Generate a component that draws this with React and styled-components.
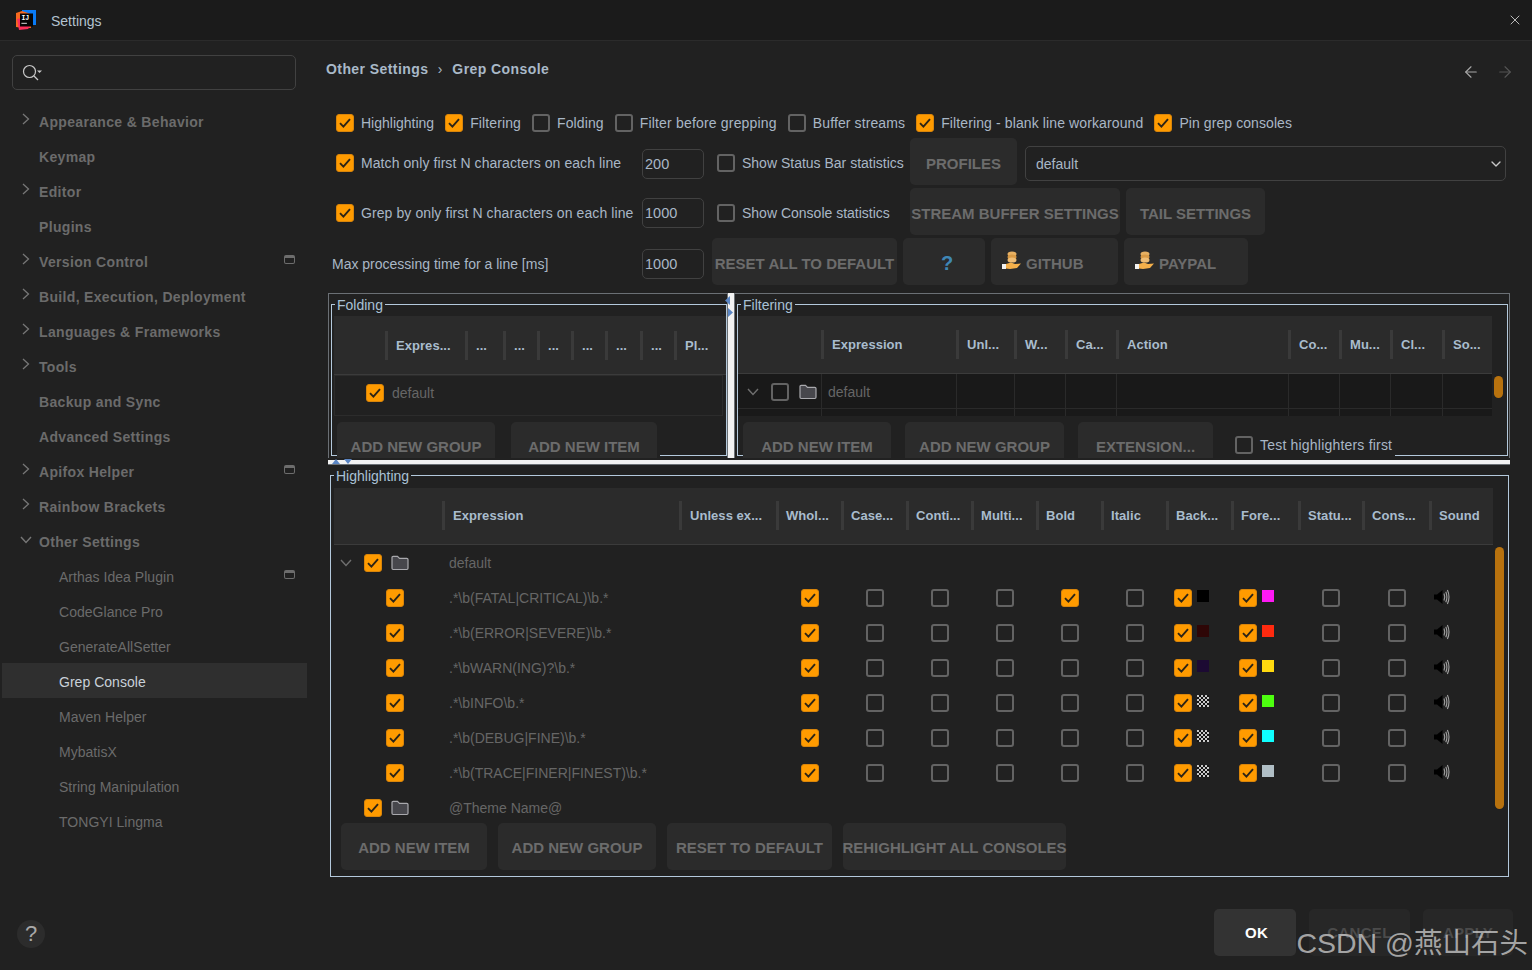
import React from "react";
import styled, { createGlobalStyle } from "styled-components";
import { ArrowLeft, ArrowRight, ChevronDown, X } from "lucide-react";

const Global = createGlobalStyle`
  html, body { margin: 0; padding: 0; background: #212121; overflow: hidden; }
  * { box-sizing: border-box; }
  body { font-family: "Liberation Sans", Arial, sans-serif; font-size: 14px; }
`;

const Root = styled.div`
  position: relative;
  width: 1532px;
  height: 970px;
  background: #212121;
  color: #a9b7c6;
  display: flex;
  flex-direction: column;
  overflow: hidden;
`;

const TitleBar = styled.header`
  height: 41px;
  flex: none;
  background: #1b1b1b;
  border-bottom: 1px solid #2b2b2b;
  display: flex;
  align-items: center;
  padding: 0 9px 0 16px;
  color: #b3c3d1;
`;
const TitleText = styled.span`
  margin: 2px 0 0 15px;
  flex: 1;
  font-size: 14px;
`;

const Body = styled.div`
  flex: 1;
  display: flex;
  min-height: 0;
`;

const Sidebar = styled.aside`
  width: 307px;
  flex: none;
  display: flex;
  flex-direction: column;
  padding-top: 14px;
`;
const Search = styled.div`
  margin-left: 12px;
  width: 284px;
  height: 35px;
  flex: none;
  border: 1px solid #414141;
  border-radius: 5px;
  display: flex;
  align-items: center;
  padding-left: 9px;
`;
const NavList = styled.nav`
  margin-top: 14px;
  margin-left: 2px;
`;
const NavRow = styled.div`
  height: 35px;
  display: flex;
  align-items: center;
  background: ${(p) => (p.$selected ? "#2f2f2f" : "transparent")};
  color: ${(p) => (p.$selected ? "#c9d1d9" : "#6b6b6b")};
  font-weight: ${(p) => (p.$sub ? 400 : 700)};
  font-size: 14px;
  letter-spacing: ${(p) => (p.$sub ? "0.03px" : "0.33px")};
  margin: ${(p) => (p.$selected ? "-1px 0 1px" : "0")};
  padding-top: ${(p) => (p.$selected ? "2px" : "0")};
`;
const NavSlot = styled.span`
  width: ${(p) => (p.$sub ? 57 : 37)}px;
  flex: none;
  display: flex;
  padding-left: ${(p) => (p.$open ? 18 : 20)}px;
  margin-top: ${(p) => (p.$open ? -3 : -5)}px;
`;
const NavLabel = styled.span`
  flex: 1;
`;
const ProjectBadge = styled.span`
  width: 11px;
  height: 9px;
  border: 1px solid #6d6d6d;
  border-top-width: 3px;
  border-radius: 2px;
  margin: -4px 12px 0 0;
`;
const HelpButton = styled.div`
  margin: auto 0 22px 17px;
  width: 28px;
  height: 28px;
  border-radius: 50%;
  background: #2c2c2c;
  color: #a8a8a8;
  font-size: 22px;
  display: flex;
  align-items: center;
  justify-content: center;
`;

const Main = styled.main`
  flex: 1;
  min-width: 0;
  display: flex;
  flex-direction: column;
  padding-top: 18px;
`;
const Breadcrumbs = styled.div`
  height: 20px;
  flex: none;
  margin-left: 19px;
  margin-right: 18px;
  display: flex;
  align-items: center;
  font-weight: 700;
  letter-spacing: 0.42px;
  color: #a9b9c8;
`;
const CrumbSep = styled.span`
  width: 24px;
  text-align: center;
  font-weight: 400;
`;
const NavArrows = styled.div`
  margin-left: auto;
  display: flex;
  gap: 16px;
  color: #a8a8a8;
  margin-top: 5px;
`;

const Options = styled.section`
  margin: 35px 0 0 29px;
  display: flex;
  flex-direction: column;
  gap: 3px;
`;
const FlagRow = styled.div`
  display: flex;
  align-items: center;
  height: 18px;
  margin-bottom: 3px;
  gap: 11px;
`;
const Flag = styled.label`
  display: flex;
  align-items: center;
  gap: 7px;
`;
const Label = styled.span`
  font-size: 14px;
  white-space: nowrap;
  color: #a9b7c6;
  width: ${(p) => (p.$w ? `${p.$w}px` : "auto")};
  margin-left: ${(p) => p.$ml || 0}px;
  flex: none;
  letter-spacing: ${(p) => p.$ls || "0"};
`;
const OptionRow = styled.div`
  display: flex;
  align-items: center;
  height: 47px;
`;
const Offset = styled.div`
  display: flex;
  align-items: center;
  height: 30px;
  margin-top: ${(p) => p.$shift}px;
  margin-left: ${(p) => p.$left || 0}px;
`;
const TextField = styled.div`
  width: 62px;
  height: 30px;
  margin: ${(p) => p.$top || 0}px ${(p) => p.$after}px 0 0;
  border: 1px solid #414141;
  border-radius: 5px;
  display: flex;
  align-items: center;
  padding-left: 2px;
  font-size: 14.5px;
  color: #a9b7c6;
`;
const Select = styled.div`
  width: 481px;
  height: 35px;
  margin: 4px 0 0 8px;
  border: 1px solid #414141;
  border-radius: 5px;
  display: flex;
  align-items: center;
  justify-content: space-between;
  padding: 0 1px 0 10px;
  font-size: 14px;
  color: #a9b7c6;
`;
const Btn = styled.div`
  width: ${(p) => p.$w}px;
  height: 47px;
  flex: none;
  margin-left: ${(p) => p.$ml || 0}px;
  background: #2b2b2b;
  border-radius: 5px;
  color: #6c6c6c;
  font-weight: 700;
  font-size: 15px;
  white-space: nowrap;
  display: flex;
  align-items: center;
  justify-content: ${(p) => (p.$start ? "flex-start" : "center")};
  padding: ${(p) => p.$top ?? 3}px 0 0 ${(p) => (p.$start ? "11px" : 0)};
  gap: 4px;
`;
const QuestionMark = styled.span`
  color: #3f87b5;
  font-size: 20px;
  margin: 0 0 0 6px;
`;
const CoinWrap = styled.span`
  display: flex;
  margin-top: -5px;
`;

const Panels = styled.section`
  margin: 8px 0 0 21px;
  width: 1182px;
  display: flex;
  flex-direction: column;
`;
const TopSplit = styled.div`
  display: flex;
  height: 165px;
`;
const Pane = styled.div`
  width: ${(p) => p.$w}px;
  height: 165px;
  flex: none;
  border: 1px solid #6b7075;
  border-bottom: 0;
  padding: 10px 0 0 ${(p) => p.$left}px;
  overflow: hidden;
`;
const VSplit = styled.div`
  position: relative;
  width: 6px;
  flex: none;
  background: #f2f2f2;
`;
const HSplit = styled.div`
  position: relative;
  height: 7px;
  flex: none;
  background: #f2f2f2;
  border-top: 2px solid #212121;
  border-bottom: 1px solid #6b7075;
`;
const Arrow = styled.svg`
  position: absolute;
  left: ${(p) => p.$x}px;
  top: ${(p) => p.$y}px;
`;
const Fieldset = styled.div`
  position: relative;
  width: ${(p) => p.$w}px;
  height: ${(p) => p.$h}px;
  flex: none;
  border: 1px solid #b4c9dc;
  padding: 11px 0 0 ${(p) => p.$left}px;
`;
const Legend = styled.span`
  position: absolute;
  top: -8px;
  left: 3px;
  padding: 0 2px;
  background: #212121;
  font-size: 14px;
  line-height: 17px;
  color: #a9c1d6;
`;
const Grid = styled.div`
  display: grid;
  grid-template-columns: ${(p) => p.$cols.map((c) => `${c}px`).join(" ")};
`;
const HeadGrid = styled(Grid)`
  height: ${(p) => p.$h}px;
  background: #2b2b2b;
  align-items: center;
  border-bottom: 1px solid #3b3b3b;
`;
const HlHead = styled(HeadGrid)`
  width: 1159px;
  padding-bottom: 2px;
`;
const HeadCell = styled.div`
  height: 29px;
  border-left: 3px solid #3a3a3a;
  margin-left: -1px;
  padding-left: ${(p) => p.$pad || 8}px;
  display: flex;
  align-items: center;
  font-weight: 700;
  font-size: 13px;
  letter-spacing: 0.05px;
  white-space: nowrap;
  color: #a9bccd;
`;
const HeadBlank = styled.div``;
const FoldRow = styled.div`
  height: 41px;
  border: 1px solid #2c2c2c;
  width: 389px;
  display: flex;
  align-items: center;
  padding: 0 0 5px 31px;
  gap: 8px;
`;
const MutedText = styled.span`
  color: #666;
  font-size: 14px;
  white-space: nowrap;
`;
const ButtonStrip = styled.div`
  position: relative;
  display: inline-flex;
  align-items: flex-start;
  height: 47px;
  margin: 6px 0 0 ${(p) => p.$ml}px;
  background: #212121;
  gap: ${(p) => p.$gap}px;
  padding-right: ${(p) => p.$right}px;
`;
const FilterBody = styled.div`
  display: flex;
`;
const DarkRow = styled(Grid)`
  height: 35px;
  background: #191919;
  border-bottom: 1px solid #2a2a2a;
`;
const DarkStrip = styled(Grid)`
  height: 7px;
  background: #191919;
`;
const DarkCell = styled.div`
  box-shadow: ${(p) => (p.$first ? "none" : "-1px 0 0 #2a2a2a")};
  display: flex;
  align-items: center;
  padding: 1px 0 0 ${(p) => p.$pad || 0}px;
  gap: ${(p) => p.$gap || 0}px;
`;
const ChevGap = styled.span`
  display: flex;
  margin-right: ${(p) => p.$r}px;
`;
const FilterScroll = styled.div`
  width: 9px;
  height: 22px;
  margin: 60px 0 0 2px;
  border-radius: 5px;
  background: #b8720e;
`;
const TestFlag = styled(Flag)`
  height: 47px;
  padding: 0 0 0 22px;
  margin: -1px 0 0 -14px;
`;

const Highlight = styled(Fieldset)`
  margin: 10px 0 0 2px;
  padding-top: 12px;
`;
const TableArea = styled.div`
  display: flex;
  height: 278px;
  overflow: hidden;
`;
const Rows = styled.div`
  width: 1159px;
  flex: none;
`;
const Row = styled(Grid)`
  height: 35px;
  align-items: center;
`;
const FirstCell = styled.div`
  display: flex;
  align-items: center;
  padding-left: ${(p) => p.$pad}px;
  gap: ${(p) => p.$gap || 0}px;
`;
const TextCell = styled.div`
  padding-left: 6px;
`;
const CenterCell = styled.div`
  display: flex;
  justify-content: center;
  align-items: center;
`;
const SoundCell = styled.div`
  display: flex;
  align-items: center;
  padding-left: 4px;
  margin-top: -2px;
`;
const ColorCell = styled.div`
  display: flex;
  align-items: center;
  padding-left: 7px;
  gap: 5px;
`;
const Swatch = styled.span`
  width: 12px;
  height: 12px;
  margin-bottom: 4px;
  background: ${(p) =>
    p.$color || "repeating-conic-gradient(#151515 0 25%, #c9c9c9 0 50%) 0 0 / 4px 4px"};
`;
const VScroll = styled.div`
  width: 9px;
  height: 262px;
  margin: 2px 0 0 2px;
  border-radius: 5px;
  background: #b8720e;
`;
const HighlightButtons = styled.div`
  display: flex;
  margin-left: 7px;
  gap: 11px;
`;

const Footer = styled.footer`
  margin: auto 19px 14px 0;
  display: flex;
  justify-content: flex-end;
  gap: 13px;
`;
const DialogBtn = styled.div`
  width: ${(p) => p.$w}px;
  height: 47px;
  padding-left: ${(p) => (p.$primary ? "3px" : 0)};
  border-radius: 5px;
  background: ${(p) => (p.$primary ? "#333" : "#272727")};
  color: ${(p) => (p.$primary ? "#fff" : "#4b4b4b")};
  font-weight: 700;
  font-size: 15px;
  letter-spacing: 0.3px;
  display: flex;
  align-items: center;
  justify-content: center;
`;
const Watermark = styled.div`
  position: absolute;
  right: 4px;
  top: 924px;
  font-family: "Liberation Sans", "Noto Sans CJK SC", sans-serif;
  font-size: 28.5px;
  line-height: 38px;
  color: rgba(214, 214, 214, 0.72);
  white-space: nowrap;
  pointer-events: none;
`;
const Box = styled.span`
  width: 18px;
  height: 18px;
  flex: none;
  border-radius: 3px;
  display: inline-flex;
  align-items: center;
  justify-content: center;
  background: ${(p) => (p.$on ? "#ff9b00" : "transparent")};
  border: ${(p) => (p.$on ? "1px solid #d9850a" : "2px solid #636363")};
`;

const Check = ({ on }) => (
  <Box $on={on}>
    {on && (
      <svg width="14" height="12" viewBox="0 0 14 12" fill="none">
        <path d="M2 6.2 L5.4 9.6 L12 2.2" stroke="#2b2417" strokeWidth="1.9" />
      </svg>
    )}
  </Box>
);

const Logo = () => (
  <svg width="20" height="20" viewBox="0 0 20 20">
    <path d="M6 0 H20 V15 L15 15 V4 H6 Z" fill="#0a7bf5" />
    <path d="M0 3 L6 1 L15 4 V18 L7 18 L0 17 Z" fill="#f6691f" />
    <path d="M1 9 L3 20 L12 19 L16 14 L6 8 Z" fill="#fb2d5a" />
    <rect x="4" y="3.5" width="13" height="13" fill="#050505" />
    <text x="5.4" y="10" fontFamily="Liberation Mono, monospace" fontWeight="700" fontSize="6.5" fill="#fff">IJ</text>
    <rect x="5.4" y="12.8" width="5.5" height="1" fill="#ddd" />
  </svg>
);
const SearchIcon = () => (
  <svg width="22" height="18" viewBox="0 0 22 18" fill="none">
    <circle cx="7.5" cy="7.5" r="6" stroke="#c9c9c9" strokeWidth="1.2" />
    <path d="M12 12 L16 16" stroke="#c9c9c9" strokeWidth="1.3" />
    <path d="M15 6.5 H20 L17.5 9 Z" fill="#c9c9c9" />
  </svg>
);
const ChevR = () => (
  <svg width="8" height="12" viewBox="0 0 8 12" fill="none">
    <path d="M1 1 L6.5 6 L1 11" stroke="#777" strokeWidth="1.3" />
  </svg>
);
const ChevD = ({ color = "#777" }) => (
  <svg width="12" height="8" viewBox="0 0 12 8" fill="none">
    <path d="M1 1 L6 6.5 L11 1" stroke={color} strokeWidth="1.4" />
  </svg>
);
const Folder = () => (
  <svg width="18" height="16" viewBox="0 0 18 16">
    <path
      d="M1 2.5 a1.2 1.2 0 0 1 1.2-1.2 h4.3 l2 2 h7.3 a1.2 1.2 0 0 1 1.2 1.2 v8.8 a1.2 1.2 0 0 1-1.2 1.2 h-13.6 a1.2 1.2 0 0 1-1.2-1.2 z"
      fill="#47474c"
      stroke="#a9a9ad"
      strokeWidth="1.2"
    />
  </svg>
);
const Sound = () => (
  <svg width="16" height="16" viewBox="0 0 16 16" fill="none">
    <path d="M0 5.5 H3 L8.5 1 V15 L3 10.5 H0 Z" fill="#000" />
    <path d="M10 4.5 Q11.5 8 10 11.5" stroke="#a2a2a2" strokeWidth="1.1" />
    <path d="M11.8 2.8 Q14 8 11.8 13.2" stroke="#a2a2a2" strokeWidth="1.1" />
    <path d="M13.4 1 Q16.6 8 13.4 15" stroke="#a2a2a2" strokeWidth="1.1" />
  </svg>
);
const Coins = () => (
  <svg width="20" height="19" viewBox="0 0 20 19">
    <ellipse cx="10" cy="3" rx="4.5" ry="2.6" fill="#e7b062" />
    <ellipse cx="10" cy="6" rx="4.5" ry="2.6" fill="#d99a45" />
    <ellipse cx="10" cy="9" rx="4.5" ry="2.6" fill="#efbd75" />
    <rect x="0" y="13" width="4" height="5" fill="#f2f2f2" />
    <path d="M4 13 L9 11.5 L13 13 L19 12.5 L15 17 L8 18 L4 17.5 Z" fill="#f5b04a" />
  </svg>
);
const TriL = ({ x, y, flip }) => (
  <Arrow $x={x} $y={y} width="7" height="9" viewBox="0 0 7 9">
    <path d={flip ? "M1 0 L6 4.5 L1 9 Z" : "M6 0 L1 4.5 L6 9 Z"} fill="#5b86c4" />
  </Arrow>
);
const TriV = ({ x, y, down }) => (
  <Arrow $x={x} $y={y} width="8" height="5" viewBox="0 0 8 5">
    <path d={down ? "M0 0 H8 L4 5 Z" : "M0 5 H8 L4 0 Z"} fill="#5b86c4" />
  </Arrow>
);

const NAV = [
  ["Appearance & Behavior", "r"],
  ["Keymap"],
  ["Editor", "r"],
  ["Plugins"],
  ["Version Control", "r", 0, 1],
  ["Build, Execution, Deployment", "r"],
  ["Languages & Frameworks", "r"],
  ["Tools", "r"],
  ["Backup and Sync"],
  ["Advanced Settings"],
  ["Apifox Helper", "r", 0, 1],
  ["Rainbow Brackets", "r"],
  ["Other Settings", "d"],
  ["Arthas Idea Plugin", 0, 1, 1],
  ["CodeGlance Pro", 0, 1],
  ["GenerateAllSetter", 0, 1],
  ["Grep Console", 0, 1, 0, 1],
  ["Maven Helper", 0, 1],
  ["MybatisX", 0, 1],
  ["String Manipulation", 0, 1],
  ["TONGYI Lingma", 0, 1],
];

const FLAGS = [
  ["Highlighting", true, "0"],
  ["Filtering", true, "0.115px"],
  ["Folding", false, "0.115px"],
  ["Filter before grepping", false, "0.18px"],
  ["Buffer streams", false, "0.115px"],
  ["Filtering - blank line workaround", true, "0.115px"],
  ["Pin grep consoles", true, "0.08px"],
];

const FOLD_COLS = [52, 80, 38, 34, 34, 34, 35, 34, 48];
const FILT_COLS = [84, 135, 58, 51, 51, 172, 51, 51, 52, 49];
const HL_COLS = [109, 237, 97, 65, 65, 65, 65, 65, 65, 65, 67, 64, 67, 63];
const HL_HEAD = ["Expression", "Unless ex...", "Whol...", "Case...", "Conti...", "Multi...", "Bold", "Italic", "Back...", "Fore...", "Statu...", "Cons...", "Sound"];
const FILT_HEAD = ["Expression", "Unl...", "W...", "Ca...", "Action", "Co...", "Mu...", "Cl...", "So..."];

const HL_RULES = [
  [".*\\b(FATAL|CRITICAL)\\b.*", "#000", "#ff19f5", true],
  [".*\\b(ERROR|SEVERE)\\b.*", "#2e0606", "#ff2a0f", false],
  [".*\\bWARN(ING)?\\b.*", "#1c0a33", "#ffd90f", false],
  [".*\\bINFO\\b.*", null, "#4dff0f", false],
  [".*\\b(DEBUG|FINE)\\b.*", null, "#0fffff", false],
  [".*\\b(TRACE|FINER|FINEST)\\b.*", null, "#b0bec5", false],
];

export default function App() {
  return (
    <Root>
      <Global />
      <TitleBar>
        <Logo />
        <TitleText>Settings</TitleText>
        <X size={16} color="#c5c5c5" strokeWidth={1.4} />
      </TitleBar>
      <Body>
        <Sidebar>
          <Search><SearchIcon /></Search>
          <NavList>
            {NAV.map(([name, chev, sub, badge, sel]) => (
              <NavRow key={name} $sub={!!sub} $selected={!!sel}>
                <NavSlot $sub={!!sub} $open={chev === "d"}>
                  {chev === "r" && <ChevR />}
                  {chev === "d" && <ChevD />}
                </NavSlot>
                <NavLabel>{name}</NavLabel>
                {badge ? <ProjectBadge /> : null}
              </NavRow>
            ))}
          </NavList>
          <HelpButton>?</HelpButton>
        </Sidebar>
        <Main>
          <Breadcrumbs>
            <span>Other Settings</span>
            <CrumbSep>›</CrumbSep>
            <span>Grep Console</span>
            <NavArrows>
              <ArrowLeft size={18} strokeWidth={1.5} />
              <ArrowRight size={18} strokeWidth={1.5} color="#555" />
            </NavArrows>
          </Breadcrumbs>

          <Options>
            <FlagRow>
              {FLAGS.map(([t, on, ls]) => (
                <Flag key={t}>
                  <Check on={on} />
                  <Label $ls={ls}>{t}</Label>
                </Flag>
              ))}
            </FlagRow>
            <OptionRow>
              <Offset $shift={3}>
                <Check on />
                <Label $w={281} $ml={7} $ls="0.08px">Match only first N characters on each line</Label>
                <TextField $after={13} $top={1}>200</TextField>
                <Check />
                <Label $w={168} $ml={7}>Show Status Bar statistics</Label>
              </Offset>
              <Btn $w={107}>PROFILES</Btn>
              <Select>
                <span>default</span>
                <ChevronDown size={16} color="#c8c8c8" strokeWidth={2} />
              </Select>
            </OptionRow>
            <OptionRow>
              <Offset $shift={3}>
                <Check on />
                <Label $w={281} $ml={7} $ls="0.09px">Grep by only first N characters on each line</Label>
                <TextField $after={13}>1000</TextField>
                <Check />
                <Label $w={168} $ml={7}>Show Console statistics</Label>
              </Offset>
              <Btn $w={210}>STREAM BUFFER SETTINGS</Btn>
              <Btn $w={139} $ml={6}>TAIL SETTINGS</Btn>
            </OptionRow>
            <OptionRow>
              <Offset $shift={5} $left={-4}>
                <Label $w={310}>Max processing time for a line [ms]</Label>
                <TextField $after={8}>1000</TextField>
              </Offset>
              <Btn $w={185}>RESET ALL TO DEFAULT</Btn>
              <Btn $w={82} $ml={6}><QuestionMark>?</QuestionMark></Btn>
              <Btn $w={127} $ml={6} $start><CoinWrap><Coins /></CoinWrap>GITHUB</Btn>
              <Btn $w={124} $ml={6} $start><CoinWrap><Coins /></CoinWrap>PAYPAL</Btn>
            </OptionRow>
          </Options>

          <Panels>
            <TopSplit>
              <Pane $w={400} $left={2}>
                <Fieldset $w={396} $h={152} $left={2}>
                  <Legend>Folding</Legend>
                  <HeadGrid $cols={FOLD_COLS} $h={59}>
                    <HeadBlank />
                    <HeadCell>Expres...</HeadCell>
                    {["a", "b", "c", "d", "e", "f"].map((k) => <HeadCell key={k}>...</HeadCell>)}
                    <HeadCell>Pl...</HeadCell>
                  </HeadGrid>
                  <FoldRow>
                    <Check on />
                    <MutedText>default</MutedText>
                  </FoldRow>
                  <ButtonStrip $ml={3} $gap={16} $right={3}>
                    <Btn $w={158} $top={1}>ADD NEW GROUP</Btn>
                    <Btn $w={146} $top={1}>ADD NEW ITEM</Btn>
                  </ButtonStrip>
                </Fieldset>
              </Pane>
              <VSplit>
                <TriL x={-4} y={3} />
                <TriL x={-1} y={15} flip />
              </VSplit>
              <Pane $w={776} $left={2}>
                <Fieldset $w={771} $h={152} $left={0}>
                  <Legend>Filtering</Legend>
                  <FilterBody>
                    <div>
                      <HeadGrid $cols={FILT_COLS} $h={58}>
                        <HeadBlank />
                        {FILT_HEAD.map((h) => <HeadCell key={h}>{h}</HeadCell>)}
                      </HeadGrid>
                      <DarkRow $cols={FILT_COLS}>
                        <DarkCell $first $pad={9} $gap={10}>
                          <ChevGap $r={2}><ChevD color="#6f6f6f" /></ChevGap>
                          <Check />
                          <Folder />
                        </DarkCell>
                        <DarkCell $pad={6}><MutedText>default</MutedText></DarkCell>
                        {Array.from({ length: 8 }, (_, i) => <DarkCell key={i} />)}
                      </DarkRow>
                      <DarkStrip $cols={FILT_COLS}>
                        {Array.from({ length: 10 }, (_, i) => <DarkCell key={i} $first={i === 0} />)}
                      </DarkStrip>
                    </div>
                    <FilterScroll />
                  </FilterBody>
                  <ButtonStrip $ml={5} $gap={14} $right={3}>
                    <Btn $w={148} $top={1}>ADD NEW ITEM</Btn>
                    <Btn $w={159} $top={1}>ADD NEW GROUP</Btn>
                    <Btn $w={135} $top={1}>EXTENSION...</Btn>
                    <TestFlag as="div">
                      <Check />
                      <Label $ls="0.2px">Test highlighters first</Label>
                    </TestFlag>
                  </ButtonStrip>
                </Fieldset>
              </Pane>
            </TopSplit>
            <HSplit>
              <TriV x={4} y={-1} />
              <TriV x={16} y={-1} down />
            </HSplit>
            <Highlight $w={1179} $h={402} $left={3}>
              <Legend>Highlighting</Legend>
              <HlHead $cols={HL_COLS} $h={57}>
                <HeadBlank />
                {HL_HEAD.map((h, i) => <HeadCell key={h} $pad={i < 2 ? 8 : 7}>{h}</HeadCell>)}
              </HlHead>
              <TableArea>
                <Rows>
                  <Row $cols={HL_COLS}>
                    <FirstCell $pad={6} $gap={9}>
                      <ChevGap $r={3}><ChevD color="#6f6f6f" /></ChevGap>
                      <Check on />
                      <Folder />
                    </FirstCell>
                    <TextCell><MutedText>default</MutedText></TextCell>
                  </Row>
                  {HL_RULES.map(([expr, back, fore, bold]) => (
                    <Row $cols={HL_COLS} key={expr}>
                      <FirstCell $pad={52}><Check on /></FirstCell>
                      <TextCell><MutedText>{expr}</MutedText></TextCell>
                      <span />
                      <CenterCell><Check on /></CenterCell>
                      <CenterCell><Check /></CenterCell>
                      <CenterCell><Check /></CenterCell>
                      <CenterCell><Check /></CenterCell>
                      <CenterCell><Check on={bold} /></CenterCell>
                      <CenterCell><Check /></CenterCell>
                      <ColorCell><Check on /><Swatch $color={back} /></ColorCell>
                      <ColorCell><Check on /><Swatch $color={fore} /></ColorCell>
                      <CenterCell><Check /></CenterCell>
                      <CenterCell><Check /></CenterCell>
                      <SoundCell><Sound /></SoundCell>
                    </Row>
                  ))}
                  <Row $cols={HL_COLS}>
                    <FirstCell $pad={30} $gap={9}>
                      <Check on />
                      <Folder />
                    </FirstCell>
                    <TextCell><MutedText>@Theme Name@</MutedText></TextCell>
                  </Row>
                </Rows>
                <VScroll />
              </TableArea>
              <HighlightButtons>
                <Btn $w={146} $top={2}>ADD NEW ITEM</Btn>
                <Btn $w={158} $top={2}>ADD NEW GROUP</Btn>
                <Btn $w={165} $top={2}>RESET TO DEFAULT</Btn>
                <Btn $w={223} $top={2}>REHIGHLIGHT ALL CONSOLES</Btn>
              </HighlightButtons>
            </Highlight>
          </Panels>

          <Footer>
            <DialogBtn $w={82} $primary>OK</DialogBtn>
            <DialogBtn $w={101}>CANCEL</DialogBtn>
            <DialogBtn $w={90}>APPLY</DialogBtn>
          </Footer>
        </Main>
      </Body>
      <Watermark>CSDN @燕山石头</Watermark>
    </Root>
  );
}
